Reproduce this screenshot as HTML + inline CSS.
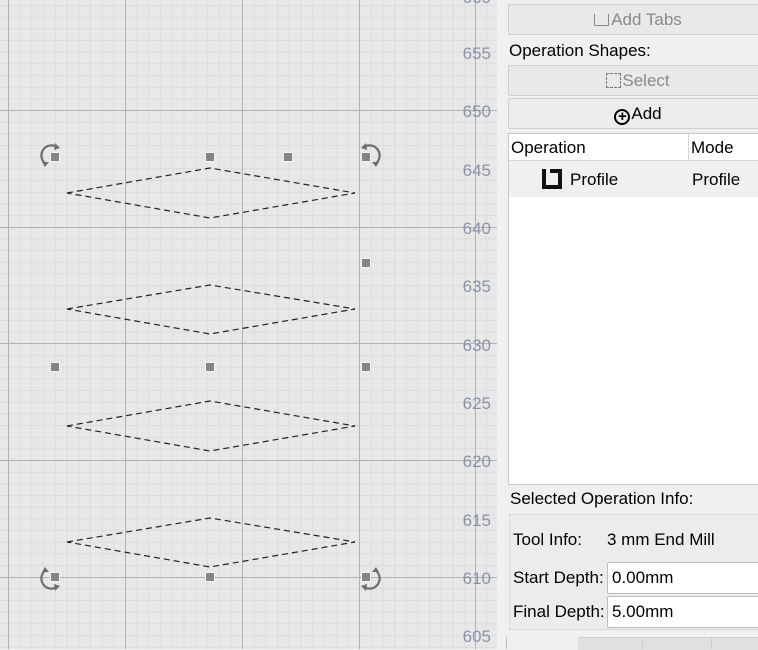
<!DOCTYPE html>
<html><head><style>
body{margin:0;width:758px;height:649px;overflow:hidden;background:#f0f0f0;font-family:"Liberation Sans",sans-serif;position:relative}
.btn{position:absolute;left:508px;width:260px;height:31px;border:1px solid #d0d0d0;background:#e9e9e9;border-radius:2px;box-sizing:border-box;text-align:center;font-size:17px;line-height:29px}
.lbl{position:absolute;font-size:17px;color:#000}
.inp{position:absolute;left:607px;width:160px;height:32px;background:#fff;border:1px solid #bdbdbd;border-radius:2px;box-sizing:border-box;font-size:17px;line-height:30px;padding-left:4px}
</style></head><body>
<svg width="497" height="649" style="position:absolute;left:0;top:0" xmlns="http://www.w3.org/2000/svg">
<rect width="497" height="649" fill="#e8e8e8"/>
<g stroke="#dcdcdc">
<path d="M20.2 0V649M31.9 0V649M43.6 0V649M55.3 0V649M67 0V649M78.7 0V649M90.4 0V649M102.1 0V649M113.8 0V649M137.2 0V649M148.9 0V649M160.6 0V649M172.3 0V649M184 0V649M195.7 0V649M207.4 0V649M219.1 0V649M230.8 0V649M254.2 0V649M265.9 0V649M277.6 0V649M289.3 0V649M301 0V649M312.7 0V649M324.4 0V649M336.1 0V649M347.8 0V649M371.2 0V649M382.9 0V649M394.6 0V649M406.3 0V649M418 0V649M429.7 0V649M441.4 0V649M453.1 0V649M464.8 0V649M486.5 0V649"/>
<path d="M0 5.5H497M0 17.2H497M0 28.9H497M0 40.5H497M0 52.2H497M0 63.9H497M0 75.5H497M0 87.2H497M0 98.9H497M0 122.2H497M0 133.9H497M0 145.5H497M0 157.2H497M0 168.9H497M0 180.5H497M0 192.2H497M0 203.9H497M0 215.5H497M0 238.9H497M0 250.5H497M0 262.2H497M0 273.9H497M0 285.5H497M0 297.2H497M0 308.9H497M0 320.5H497M0 332.2H497M0 355.5H497M0 367.2H497M0 378.9H497M0 390.5H497M0 402.2H497M0 413.9H497M0 425.5H497M0 437.2H497M0 448.9H497M0 472.2H497M0 483.9H497M0 495.5H497M0 507.2H497M0 518.9H497M0 530.5H497M0 542.2H497M0 553.9H497M0 565.5H497M0 588.9H497M0 600.5H497M0 612.2H497M0 623.9H497M0 635.5H497M0 647.2H497"/>
</g>
<g stroke="#b2b2b2">
<path d="M8.5 0V649M125.5 0V649M242.5 0V649M359.5 0V649M475.5 0V649"/>
<path d="M0 110.5H497M0 227.5H497M0 343.5H497M0 460.5H497M0 577.5H497"/>
</g>
<g font-family="Liberation Sans" font-size="17" fill="#8a93a6" text-anchor="end">
<text x="491" y="3">660</text><text x="491" y="59">655</text><text x="491" y="117">650</text><text x="491" y="176">645</text><text x="491" y="234">640</text><text x="491" y="292">635</text><text x="491" y="351">630</text><text x="491" y="409">625</text><text x="491" y="467">620</text><text x="491" y="526">615</text><text x="491" y="584">610</text><text x="491" y="642">605</text>
</g>
<g fill="none" stroke="#222" stroke-width="1.2" stroke-dasharray="6,4">
<path d="M67 193L210 168L355 193L210 218Z"/>
<path d="M67 309L210 285L355 309L210 334Z"/>
<path d="M67 426L210 401L355 426L210 451Z"/>
<path d="M67 542L210 518L355 542L210 567Z"/>
</g>
<g fill="#858585" stroke="#f4f4f4" stroke-width="1">
<rect x="50.5" y="152.5" width="9" height="9"/><rect x="205.5" y="152.5" width="9" height="9"/><rect x="283.5" y="152.5" width="9" height="9"/><rect x="361.5" y="152.5" width="9" height="9"/>
<rect x="361.5" y="258.5" width="9" height="9"/>
<rect x="50.5" y="362.5" width="9" height="9"/><rect x="205.5" y="362.5" width="9" height="9"/><rect x="361.5" y="362.5" width="9" height="9"/>
<rect x="50.5" y="572.5" width="9" height="9"/><rect x="205.5" y="572.5" width="9" height="9"/><rect x="361.5" y="572.5" width="9" height="9"/>
</g>
<g fill="none" stroke="#6e6e6e" stroke-width="2.2">
<path d="M46 164A9 9 0 0 1 57 147"/><path d="M375 164A9 9 0 0 0 364 147"/>
<path d="M46 570A9 9 0 0 0 57 587"/><path d="M375 570A9 9 0 0 1 364 587"/>
</g>
<g fill="#6e6e6e">
<path d="M55 143L60 148L54 150Z"/><path d="M366 143L361 148L367 150Z"/>
<path d="M55 591L60 586L54 584Z"/><path d="M366 591L361 586L367 584Z"/>
<path d="M42 162L49 162L45 167Z"/><path d="M379 162L372 162L376 167Z"/>
<path d="M42 572L49 572L45 567Z"/><path d="M379 572L372 572L376 567Z"/>
</g>
</svg>
<div class="btn" style="top:4px;color:#8a8a8a"><span style="display:inline-block;width:13px;height:11px;border:1.5px solid #888;border-top:none;vertical-align:-1px;margin-right:2px"></span>Add Tabs</div>
<div class="lbl" style="left:509px;top:41px">Operation Shapes:</div>
<div class="btn" style="top:65px;color:#8a8a8a"><span style="display:inline-block;width:13px;height:13px;border:1.5px dashed #777;vertical-align:-2px;margin-right:1px"></span>Select</div>
<div class="btn" style="top:98px;color:#000;background:#ececec"><span style="display:inline-block;width:16px;height:16px;border:2px solid #000;border-radius:50%;box-sizing:border-box;font-size:15px;line-height:11px;font-weight:bold;vertical-align:-2px;margin-right:1px;text-align:center">+</span>Add</div>
<div style="position:absolute;left:508px;top:133px;width:260px;height:352px;background:#fff;border:1px solid #c8c8c8;box-sizing:border-box"></div>
<div style="position:absolute;left:509px;top:134px;width:260px;height:26px;background:#fff;border-bottom:1px solid #d5d5d5"></div>
<div style="position:absolute;left:688px;top:134px;width:1px;height:26px;background:#d5d5d5"></div>
<div class="lbl" style="left:511px;top:138px">Operation</div>
<div class="lbl" style="left:691px;top:138px">Mode</div>
<div style="position:absolute;left:509px;top:161px;width:250px;height:36px;background:#f0f0f0"></div>
<div style="position:absolute;left:542px;top:169px;width:20px;height:20px;border:4px solid #111;border-top:none;box-sizing:border-box"></div>
<div style="position:absolute;left:550px;top:169px;width:12px;height:4px;background:#111"></div>
<div class="lbl" style="left:570px;top:170px">Profile</div>
<div class="lbl" style="left:692px;top:170px">Profile</div>
<div class="lbl" style="left:510px;top:489px">Selected Operation Info:</div>
<div style="position:absolute;left:509px;top:514px;width:260px;height:116px;border:1px solid #d8d8d8;box-sizing:border-box;background:#ececec"></div>
<div class="lbl" style="left:513px;top:530px">Tool Info:</div>
<div class="lbl" style="left:607px;top:530px">3 mm End Mill</div>
<div class="lbl" style="left:513px;top:568px">Start Depth:</div>
<div class="inp" style="top:562px">0.00mm</div>
<div class="lbl" style="left:513px;top:602px">Final Depth:</div>
<div class="inp" style="top:596px">5.00mm</div>
<div style="position:absolute;left:506px;top:637px;width:1px;height:12px;background:#bbb"></div>
<div style="position:absolute;left:578px;top:637px;width:190px;height:12px;background:#e0e0e0;border-top:1px solid #ccc"></div>
<div style="position:absolute;left:642px;top:637px;width:1px;height:12px;background:#ccc"></div>
<div style="position:absolute;left:711px;top:637px;width:1px;height:12px;background:#ccc"></div>
</body></html>
